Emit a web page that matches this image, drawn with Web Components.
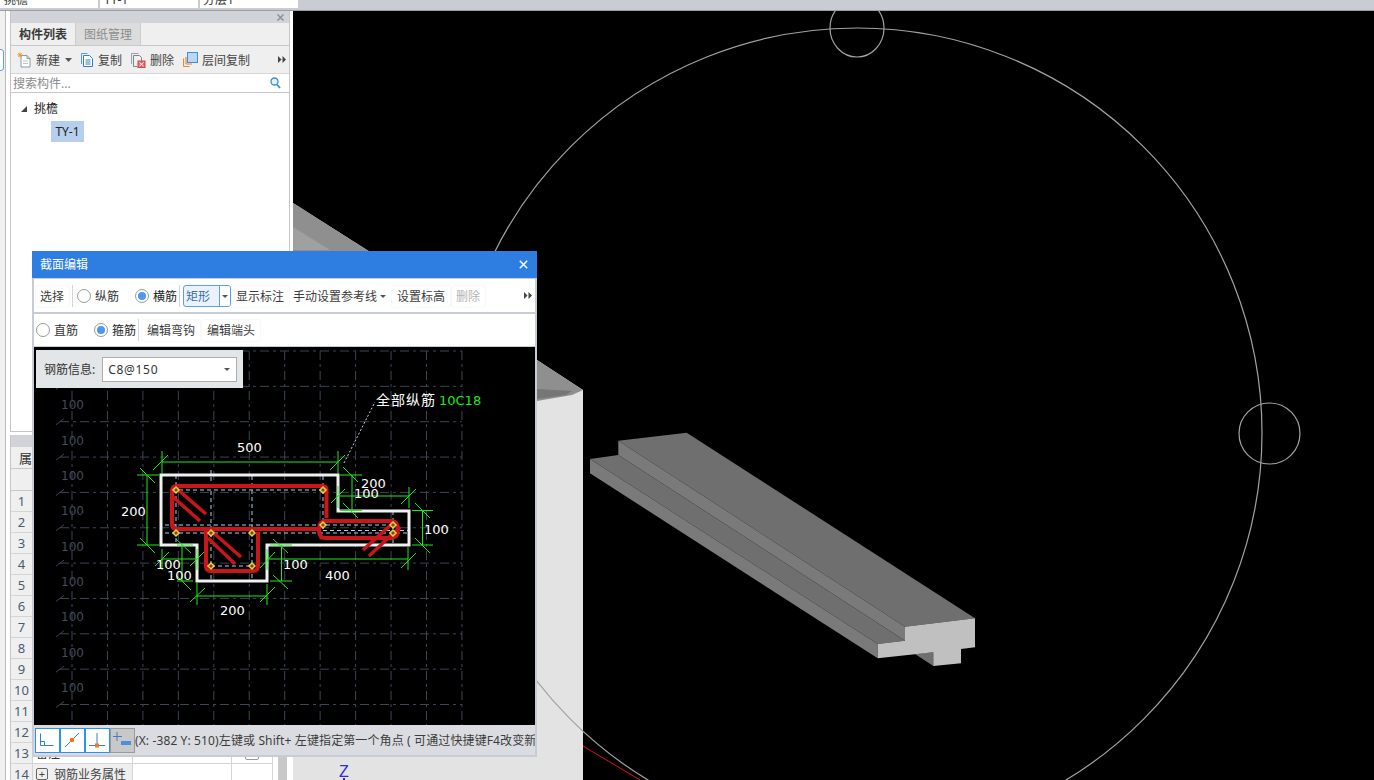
<!DOCTYPE html>
<html lang="zh">
<head>
<meta charset="utf-8">
<title>截面编辑</title>
<style>
  html, body { margin: 0; height: 100%; overflow: hidden; background: #000; }
  body { font: 12px "Noto Sans", "Noto Sans CJK SC", sans-serif; color: #3c3c3c; }
</style>
</head>
<body>
<app-shell>
  <section-dialog></section-dialog>
</app-shell>

<script>
class AppShell extends HTMLElement {
  connectedCallback() {
    this.attachShadow({ mode: 'open' });
    this.shadowRoot.innerHTML = `
      <style>
        :host { display: grid; grid-template-rows: 11px 1fr; width: 1374px; height: 780px; position: relative; overflow: hidden; }
        main { display: flex; min-height: 0; }
        scene-view { flex: 1; }
      </style>
      <top-strip></top-strip>
      <main>
        <left-dock></left-dock>
        <scene-view></scene-view>
      </main>
      <slot></slot>
    `;
  }
}

class TopStrip extends HTMLElement {
  connectedCallback() {
    this.attachShadow({ mode: 'open' });
    this.shadowRoot.innerHTML = `
      <style>
        :host { display: flex; gap: 2px; background: #c9cdd3; border-bottom: 1px solid #9a9da2; box-sizing: border-box; height: 11px; overflow: hidden; }
        div { width: 98px; height: 8px; background: #fff; overflow: hidden; line-height: 12px; font-size: 12px; color: #333; }
        span { display: block; margin-top: -6px; padding-left: 3px; }
        div:nth-child(2) span { padding-left: 4px; }
        div:nth-child(3) span { padding-left: 4px; }
      </style>
      <div><span>挑檐</span></div>
      <div><span>TY-1</span></div>
      <div><span>分层1</span></div>
    `;
  }
}

class LeftDock extends HTMLElement {
  connectedCallback() {
    this.attachShadow({ mode: 'open' });
    this.shadowRoot.innerHTML = `
      <style>
        :host { display: flex; width: 293px; height: 769px; background: #fff; box-sizing: border-box; border-right: 1px solid #fff; }
        .strip { width: 10px; flex: none; position: relative; box-sizing: border-box; background: linear-gradient(90deg, #f0f0f0 0 5px, #bbb 5px 6px, #fff 6px); }
        .strip i { position: absolute; left: -3px; top: 38px; width: 5px; height: 20px; background: #fff; border: 1px solid #5a9fe8; border-radius: 3px; }
        .panels { width: 280px; display: flex; flex-direction: column; gap: 3px; }
        component-panel { height: 421px; flex: none; }
        property-panel { flex: 1; min-height: 0; }
      </style>
      <div class="strip"><i></i></div>
      <div class="panels">
        <component-panel></component-panel>
        <property-panel></property-panel>
      </div>
    `;
  }
}

class ComponentPanel extends HTMLElement {
  connectedCallback() {
    this.attachShadow({ mode: 'open' });
    this.shadowRoot.innerHTML = `
      <style>
        :host { display: flex; flex-direction: column; box-sizing: border-box; border: solid #c6c6c6; border-width: 0 1px 1px 1px; background: #fff; font-size: 12px; }
        .title { height: 12px; background: #d1d3d8; display: flex; justify-content: flex-end; align-items: center; padding-right: 4px; }
        .tabs { height: 22px; background: #efefef; display: flex; border-bottom: 1px solid #c8c8c8; }
        .tab { width: 64px; display: flex; align-items: center; justify-content: center; font-weight: 700; color: #3a3a3a; }
        .tab.off { background: #dcdcdc; color: #8c8c8c; font-weight: 400; border: solid #cdcdcd; border-width: 0 1px; }
        .tools { height: 27px; background: #efefef; display: flex; align-items: center; padding-left: 6px; border-bottom: 1px solid #d6d6d6; position: relative; }
        .tool { display: flex; align-items: center; gap: 4px; color: #444; }
        .tool + .tool { margin-left: 8px; }
        .tools .more { margin-left: auto; margin-right: 3px; }
        .search { height: 18px; display: flex; align-items: center; padding: 0 8px 0 2px; justify-content: space-between; color: #8a8a8a; border-bottom: 1px solid #c8c8c8; }
        .tree { flex: 1; position: relative; padding: 4px 0 0 10px; color: #222; }
        .node { display: flex; align-items: center; gap: 6px; height: 22px; }
        .leaf { margin: 2px 0 0 30px; width: 33px; height: 21px; line-height: 21px; background: #b5cfec; text-align: center; color: #222; }
        .tri { width: 0; height: 0; border-style: solid; border-width: 0 0 6px 6px; border-color: transparent transparent #444 transparent; margin-top: 2px; margin-right: 1px; }
        svg { display: block; flex: none; }
      </style>
      <div class="title">
        <svg width="9" height="9" viewBox="0 0 9 9"><path d="M1.5 1.5l6 6M7.5 1.5l-6 6" stroke="#8f9297" stroke-width="1.6"/></svg>
      </div>
      <div class="tabs">
        <div class="tab">构件列表</div>
        <div class="tab off">图纸管理</div>
      </div>
      <div class="tools">
        <span class="tool">
          <svg width="15" height="16" viewBox="0 0 15 16"><path d="M4 3.5h6l3 3v8.500H4z" fill="#fff" stroke="#8b9aa6"/><path d="M10 3.500v3h3" fill="none" stroke="#8b9aa6"/><path d="M6 9h5M6 11.500h5" stroke="#b9c4cc"/><path d="M3 .5v5M.5 3h5M1.200 1.200l3.600 3.600M4.800 1.200L1.200 4.800" stroke="#f29a2e"/></svg>
          新建
          <svg width="7" height="4" viewBox="0 0 7 4" style="margin-left:1px"><path d="M0 0h7L3.500 4z" fill="#555"/></svg>
        </span>
        <span class="tool" style="margin-left:8px">
          <svg width="14" height="16" viewBox="0 0 14 16"><path d="M1.500 12V1.500h6" fill="none" stroke="#5a9ad8"/><path d="M3.500 3.500h6l3 3v8h-9z" fill="#fff" stroke="#2f7fd0"/><path d="M5.500 8h5M5.500 10h5M5.500 12h5" stroke="#2f7fd0"/></svg>
          复制
        </span>
        <span class="tool">
          <svg width="16" height="16" viewBox="0 0 16 16"><path d="M1.500 12V1.500h7" fill="none" stroke="#9aa0a5"/><path d="M3.500 3.500h6l2 2v4M3.500 3.500v11h4" fill="none" stroke="#7e8488"/><rect x="8" y="9" width="7" height="6.500" fill="#e8686a" stroke="#c94b4e"/><path d="M9.500 10.500l4 3.500M13.500 10.500l-4 3.500" stroke="#fff"/></svg>
          删除
        </span>
        <span class="tool" style="margin-left:9px">
          <svg width="15" height="15" viewBox="0 0 15 15"><path d="M.5 14.500V6.500M.5 14.500h6M3 12V5M3 12h6" fill="none" stroke="#ee8430" stroke-width="1.200"/><rect x="4.500" y=".5" width="10" height="10" fill="#b9d6f6" stroke="#3f8ee0"/></svg>
          层间复制
        </span>
        <svg class="more" width="8" height="7" viewBox="0 0 8 7"><path d="M0 0l3.500 3.500L0 7zM4.500 0L8 3.500 4.500 7z" fill="#444"/></svg>
      </div>
      <div class="search">
        <span>搜索构件...</span>
        <svg width="11" height="12" viewBox="0 0 11 12"><circle cx="4.500" cy="4.500" r="3.500" fill="#e4f1fb" stroke="#3a8fc8" stroke-width="1.300"/><path d="M7 7.500l3 3.500" stroke="#3a8fc8" stroke-width="1.800"/></svg>
      </div>
      <div class="tree">
        <div class="node"><i class="tri"></i><span>挑檐</span></div>
        <div class="leaf">TY-1</div>
      </div>
    `;
  }
}

class PropertyPanel extends HTMLElement {
  connectedCallback() {
    this.attachShadow({ mode: 'open' });
    let rows = '';
    for (let i = 1; i <= 14; i++) {
      let name = '';
      if (i === 13) name = '备注';
      if (i === 14) name = '<i class="plus">+</i>钢筋业务属性';
      const check = i === 13 ? '<i class="check"></i>' : '';
      rows += `<div class="row"><span class="num">${i}</span><span class="name ${i === 14 ? 'group' : ''}">${name}</span><span class="val"></span><span class="chk">${check}</span></div>`;
    }
    this.shadowRoot.innerHTML = `
      <style>
        :host { display: flex; flex-direction: column; background: #fff; box-sizing: border-box; border-left: 1px solid #c6c6c6; overflow: hidden; font-size: 12px; position: relative; }
        .title { height: 12px; background: #d1d3d8; flex: none; }
        .head { height: 22px; flex: none; background: #efefef; border-bottom: 1px solid #c8c8c8; box-sizing: border-box; display: flex; align-items: center; padding-left: 8px; font-size: 13px; color: #333; }
        .blank { height: 22px; flex: none; background: #efefef; border-bottom: 1px solid #c8c8c8; box-sizing: border-box; }
        .body { display: flex; flex: 1; min-height: 0; }
        .rows { width: 262px; flex: none; }
        .row { display: grid; grid-template-columns: 22px 100px 99px 41px; height: 21px; box-sizing: border-box; border-bottom: 1px solid #d4d4d4; }
        .row > span { border-right: 1px solid #d4d4d4; display: flex; align-items: center; }
        .num { background: #efefef; justify-content: center; color: #4b5c6e; font-size: 13px; }
        .name { padding-left: 3px; color: #333; }
        .group { background: #efefef; color: #444; }
        .chk { justify-content: center; }
        .plus { width: 10px; height: 10px; border: 1px solid #666; border-radius: 2px; font-style: normal; line-height: 9px; text-align: center; margin-right: 6px; font-size: 11px; flex: none; }
        .check { width: 12px; height: 12px; border: 1px solid #999; border-radius: 2px; }
        .scroll { width: 9px; margin-left: 5px; background: #c8c8c8; flex: none; }
      </style>
      <div class="title"></div>
      <div class="head">属性列表</div>
      <div class="blank"></div>
      <div class="body">
        <div class="rows">${rows}</div>
        <div class="scroll"></div>
      </div>
    `;
  }
}

class SceneView extends HTMLElement {
  connectedCallback() {
    this.attachShadow({ mode: 'open' });
    this.shadowRoot.innerHTML = `
      <style>
        :host { display: block; background: #000; overflow: hidden; }
        svg { display: block; }
      </style>
      <svg width="1081" height="769" viewBox="293 11 1081 769">
        <!-- big wall behind the dialog -->
        <polygon points="293,203 367,250 537,360 583,390 583,780 293,780" fill="#e3e3e3"/>
        <polygon points="293,203 367,250 537,360 583,390 572,395 537,401 293,400" fill="#8f8f8f"/>
        <polygon points="293,227 330,250 293,250" fill="#a0a0a0"/>
        <polygon points="537,389 572,391 566,395 537,399" fill="#767676"/>

        <!-- beam -->
        <polygon points="618.300,440.700 686.700,432.700 975,618.300 905,626.700" fill="#6f6f6f"/>
        <polygon points="618.300,440.700 905,626.700 905,640.700 618.300,455" fill="#7a7a7a"/>
        <polygon points="590,459 618.300,455 905,640.700 877.700,644" fill="#6f6f6f"/>
        <polygon points="590,459 877.700,644 877.700,658.300 590,473.300" fill="#7a7a7a"/>
        <polygon points="915,654 933.300,652.300 933.300,666" fill="#6f6f6f"/>
        <polygon points="905,626.700 975,618.300 975,647.300 961,649 961,663.300 933.300,666 933.300,652.300 877.700,658.300 877.700,644 905,640.700" fill="#c0c0c0"/>

        <!-- work circles -->
        <g fill="none" stroke="#a2a2a2" stroke-width="1.200">
          <circle cx="857" cy="433" r="405"/>
          <ellipse cx="857" cy="28" rx="27" ry="29"/>
          <circle cx="1269.500" cy="433.500" r="30.500"/>
        </g>
        <line x1="583" y1="746" x2="640" y2="780" stroke="#e01010"/>
        <text x="339" y="777" font-size="16" fill="#2a2ae8" font-family="Liberation Sans, sans-serif">Z</text>
        <line x1="344" y1="778" x2="344" y2="780" stroke="#2a2ae8" stroke-width="2"/>
      </svg>
    `;
  }
}

class RadioItem extends HTMLElement {
  connectedCallback() {
    const label = this.getAttribute('label');
    const on = this.hasAttribute('checked');
    this.attachShadow({ mode: 'open' });
    this.shadowRoot.innerHTML = `
      <style>
        :host { display: inline-flex; align-items: center; gap: 4px; }
        i { width: 12px; height: 12px; border: 1px solid #999; border-radius: 50%; background: #fff; display: flex; align-items: center; justify-content: center; flex: none; }
        b { width: 8px; height: 8px; border-radius: 50%; background: #4d97ee; }
        span { color: ${on ? '#222' : '#333'}; }
      </style>
      <i>${on ? '<b></b>' : ''}</i><span>${label}</span>
    `;
  }
}

class SectionDialog extends HTMLElement {
  connectedCallback() {
    this.attachShadow({ mode: 'open' });
    this.shadowRoot.innerHTML = `
      <style>
        :host { position: absolute; left: 32px; top: 251px; width: 505px; height: 506px; box-sizing: border-box; display: flex; flex-direction: column; background: #c8ccd4; font-size: 12px; color: #3c3c3c; }
        .title { height: 27px; flex: none; background: #2d7ee0; color: #fff; display: flex; align-items: center; justify-content: space-between; padding: 0 9px 1px 8px; box-sizing: border-box; }
        .inner { flex: 1; min-height: 0; display: flex; flex-direction: column; padding: 1px 2px 2px 2px; }
        .bar { background: #fff; height: 33px; flex: none; display: flex; align-items: center; box-sizing: border-box; position: relative; margin-bottom: 2px; }
        .bar.one { padding: 1px 0 0 1px; }
        .bar.two { height: 32px; margin-bottom: 1px; padding-left: 2px; }
        .btn { padding: 3px 5px; border: 1px solid #f8f8f8; border-radius: 3px; line-height: 15px; white-space: nowrap; }
        .sep { width: 1px; height: 22px; background: #d5d5d5; flex: none; }
        .combo { display: flex; width: 48px; height: 22px; box-sizing: border-box; border: 1px solid #5a9fe8; border-radius: 3px; margin: 0 0 0 3px; align-items: center; background: #e9f2fd; color: #3a6ea8; flex: none; }
        .combo span { flex: 1; padding-left: 2px; }
        .combo i { width: 10px; height: 20px; background: #fff; border-left: 1px solid #5a9fe8; display: flex; align-items: center; justify-content: center; border-radius: 0 2px 2px 0; }
        .arrow { width: 0; height: 0; border: solid transparent; border-width: 3px 3px 0 3px; border-top-color: #555; display: inline-block; }
        .more { position: absolute; right: 3px; top: 13px; }
        svg { display: block; }
        .canvas { flex: 1; min-height: 0; position: relative; background: #000; }
        .rebar { position: absolute; left: 2px; top: 3px; width: 207px; height: 38px; background: #e2e6e8; display: flex; align-items: center; padding-left: 8px; box-sizing: border-box; gap: 7px; color: #333; }
        .select { width: 135px; height: 25px; box-sizing: border-box; border: 1px solid #adadad; background: #fff; display: flex; align-items: center; justify-content: space-between; padding: 0 6px 0 5px; color: #333; }
        .select span { letter-spacing: .7px; }
        .status { height: 30px; flex: none; background: #dbdce1; display: flex; align-items: center; padding-left: 1px; overflow: hidden; white-space: nowrap; color: #3c3c3c; }
        .snap { width: 25px; height: 25px; box-sizing: border-box; background: #fff; border: 1.500px solid #2e90f0; flex: none; }
        .snap.on { background: #c8c8c8; border: 1px solid #9a9a9a; }
        .msg { overflow: hidden; font-size: 12px; letter-spacing: .12px; }
        section-canvas { display: block; }
      </style>
      <div class="title">
        <span>截面编辑</span>
        <svg width="9" height="9" viewBox="0 0 9 9"><path d="M.8.8l7.400 7.400M8.200.8L.8 8.200" stroke="#fff" stroke-width="1.500"/></svg>
      </div>
      <div class="inner">
        <div class="bar one">
          <span class="btn" style="margin-left:0;padding-left:4px">选择</span>
          <span class="sep" style="margin:0 4px 0 2px"></span>
          <radio-item label="纵筋"></radio-item>
          <radio-item label="横筋" checked style="margin-left:16px"></radio-item>
          <span class="sep" style="margin-left:2px"></span>
          <div class="combo"><span>矩形</span><i><b class="arrow"></b></i></div>
          <span class="btn" style="padding-left:4px">显示标注</span>
          <span style="margin-left:3px">手动设置参考线</span>
          <b class="arrow" style="margin-left:3px"></b>
          <span class="btn" style="margin-left:5px">设置标高</span>
          <span class="btn" style="color:#b4b4b4;padding-left:4px">删除</span>
          <svg class="more" width="8" height="7" viewBox="0 0 8 7"><path d="M0 0l3.500 3.500L0 7zM4.500 0L8 3.500 4.500 7z" fill="#444"/></svg>
        </div>
        <div class="bar two">
          <radio-item label="直筋"></radio-item>
          <radio-item label="箍筋" checked style="margin-left:16px"></radio-item>
          <span class="sep" style="margin-left:2px;margin-right:2px"></span>
          <span class="btn">编辑弯钩</span>
          <span class="btn" style="margin-left:0">编辑端头</span>
        </div>
        <div class="canvas">
          <section-canvas></section-canvas>
          <div class="rebar">
            <span>钢筋信息:</span>
            <div class="select"><span>C8@150</span><b class="arrow"></b></div>
          </div>
        </div>
        <div class="status">
          <span class="snap"><svg width="22" height="22" viewBox="0 0 22 22"><path d="M4.500 4.500v12h13M4.500 12.500h4v4" fill="none" stroke="#2e7fd8"/></svg></span>
          <span class="snap"><svg width="22" height="22" viewBox="0 0 22 22"><path d="M4 18L18 4" stroke="#2e7fd8"/><rect x="9" y="9" width="4" height="4" fill="#ee7a20"/></svg></span>
          <span class="snap"><svg width="22" height="22" viewBox="0 0 22 22"><path d="M3 16.500h16M11 4v12.500" stroke="#2e7fd8"/><rect x="9" y="14.500" width="4" height="4" fill="#ee7a20"/></svg></span>
          <span class="snap on"><svg width="23" height="23" viewBox="0 0 23 23"><path d="M6 3v9M2 7.500h9" stroke="#3a80c8"/><rect x="10" y="12" width="10" height="4" fill="#4a90e0"/></svg></span>
          <span class="msg">(X: -382 Y: 510)左键或 Shift+ 左键指定第一个角点 ( 可通过快捷键F4改变新</span>
        </div>
      </div>
    `;
  }
}

class SectionCanvas extends HTMLElement {
  connectedCallback() {
    this.attachShadow({ mode: 'open' });

    // grid
    let grid = '';
    for (let i = 0; i < 12; i++) {
      const x = 72 + i * 35.45;
      grid += `<line x1="${x}" y1="351" x2="${x}" y2="725"/>`;
    }
    for (let i = 0; i < 11; i++) {
      const y = 351 + i * 35.35;
      grid += `<line x1="60" y1="${y}" x2="462" y2="${y}"/>`;
    }

    let ticks = '', dimLabels = '';
    for (let i = 1; i < 11; i++) {
      const y = 351 + i * 35.35;
      ticks += `<line x1="56" y1="${y + 3}" x2="64" y2="${y - 3}"/>`;
    }
    for (let i = 1; i < 10; i++) {
      dimLabels += `<text x="61" y="${374 + i * 35.35}">100</text>`;
    }

    // green dimension lines: [x1, y1, x2, y2]
    const dims = [
      [162,462,338,462],[162,451,162,474],[338,451,338,474],[153,470,168,455],[330,470,345,455],
      [147,475,147,545],[137,475,159,475],[137,545,159,545],[140,468,155,483],[140,538,155,553],
      [162,559,197,559],[162,549,162,570],[197,549,197,570],[155,566,169,552],[190,566,204,552],
      [182,545,182,581],[177,545,193,545],[177,581,193,581],[176,539,191,553],[176,575,191,590],
      [197,596,267,596],[197,583,197,605],[267,584,267,605],[190,602,205,588],[260,602,275,587],
      [281.5,545,281.5,581],[270,545,292,545],[270,581,292,581],[273,539,288,553],[273,575,288,589],
      [267,559,408,559],[267,549,267,570],[408,547,408,570],[260,568,275,552],[401,568,416,553],
      [352,475,352,511],[340,475,362,475],[340,510.5,362,510.5],[343,467,358,482],[343,503,358,518],
      [338,496,409,496],[338,486,338,508],[409,487,409,508],[331,503,345,489],[401,504,416,489],
      [422.5,511,422.5,545],[412,510.5,433,510.5],[412,545,433,545],[415,503,430,518],[415,538,430,553],
    ];
    const green = dims.map(d => `<line x1="${d[0]}" y1="${d[1]}" x2="${d[2]}" y2="${d[3]}"/>`).join('');

    // light blue construction lines
    const guides = [
      [172,490,327,490],[165,525,395,525],[165,533,408,533],[323,530.5,408,530.5],[211,566,252,566],
      [176,475,176,545],[211,470,211,581],[252,476,252,581],[323,476,323,530],[393,511,393,546],
    ];
    const blue = guides.map(d => `<line x1="${d[0]}" y1="${d[1]}" x2="${d[2]}" y2="${d[3]}"/>`).join('');

    const points = [[176,490],[176,533],[211,533],[252,533],[211,566],[252,566],[323,490],[323,525],[393,525],[393,533]];
    const pins = points.map(p => `<path d="M${p[0]} ${p[1] - 3}l3 3-3 3-3-3z" fill="#7a4a10" stroke="#f4d048" stroke-width="1.500"/>`).join('');

    const labels = [
      [237,452,'500'],[121,516,'200'],[361,488,'200'],[354,498,'100'],[424,534,'100'],
      [156,569,'100'],[167,580,'100'],[283,569,'100'],[325,580,'400'],[220,615,'200'],
    ].map(t => `<text x="${t[0]}" y="${t[1]}">${t[2]}</text>`).join('');

    this.shadowRoot.innerHTML = `
      <style>
        :host { display: block; width: 501px; height: 378px; }
        svg { display: block; }
        text { font-family: "DejaVu Sans", sans-serif; }
      </style>
      <svg width="501" height="378" viewBox="34 347 501 378">
        <g stroke="#3d4454" stroke-dasharray="9 4 3 4" fill="none">${grid}</g>
        <g stroke="#3d4454" fill="none">${ticks}</g>
        <g fill="#444b5b" font-size="12">${dimLabels}</g>

        <g stroke="#a8cdf0" stroke-dasharray="4 3" fill="none">${blue}</g>
        <path d="M161 475H338V511H409V545H267V581H197V545H161Z" fill="none" stroke="#f0f0f0" stroke-width="3"/>
        <g stroke="#20e820" fill="none">${green}</g>

        <g fill="none" stroke="#c8161c" stroke-width="4">
          <path d="M177 486H322Q326.5 486 326.5 490V518"/>
          <path d="M177 486Q172 486 172 491V524Q172 529 177 529H319"/>
          <path d="M206 529V566Q206 571 211 571H253Q258 571 258 566V532"/>
          <path d="M325 521H391Q398 521 398 529.5Q398 538 391 538H325Q319 538 319 530Q319 521 325 521Z"/>
        </g>
        <g stroke="#c8161c" stroke-width="3.500">
          <line x1="176" y1="488" x2="206" y2="514"/>
          <line x1="173" y1="497" x2="200" y2="521"/>
          <line x1="208" y1="528" x2="241" y2="557"/>
          <line x1="208" y1="538" x2="235" y2="564"/>
          <line x1="394" y1="522" x2="363" y2="550"/>
          <line x1="400" y1="527" x2="369" y2="556"/>
        </g>
        ${pins}

        <g fill="#fff" font-size="13">${labels}</g>
        <line x1="344" y1="463" x2="375" y2="402" stroke="#cfcfcf" stroke-dasharray="2 2"/>
        <text x="376" y="405" fill="#fff" font-size="14" letter-spacing="1" style="font-family:'Noto Sans CJK SC',sans-serif">全部纵筋</text>
        <text x="439" y="405" fill="#1ee81e" font-size="13">10C18</text>
      </svg>
    `;
  }
}

customElements.define('app-shell', AppShell);
customElements.define('top-strip', TopStrip);
customElements.define('left-dock', LeftDock);
customElements.define('component-panel', ComponentPanel);
customElements.define('property-panel', PropertyPanel);
customElements.define('scene-view', SceneView);
customElements.define('radio-item', RadioItem);
customElements.define('section-dialog', SectionDialog);
customElements.define('section-canvas', SectionCanvas);
</script>
</body>
</html>
